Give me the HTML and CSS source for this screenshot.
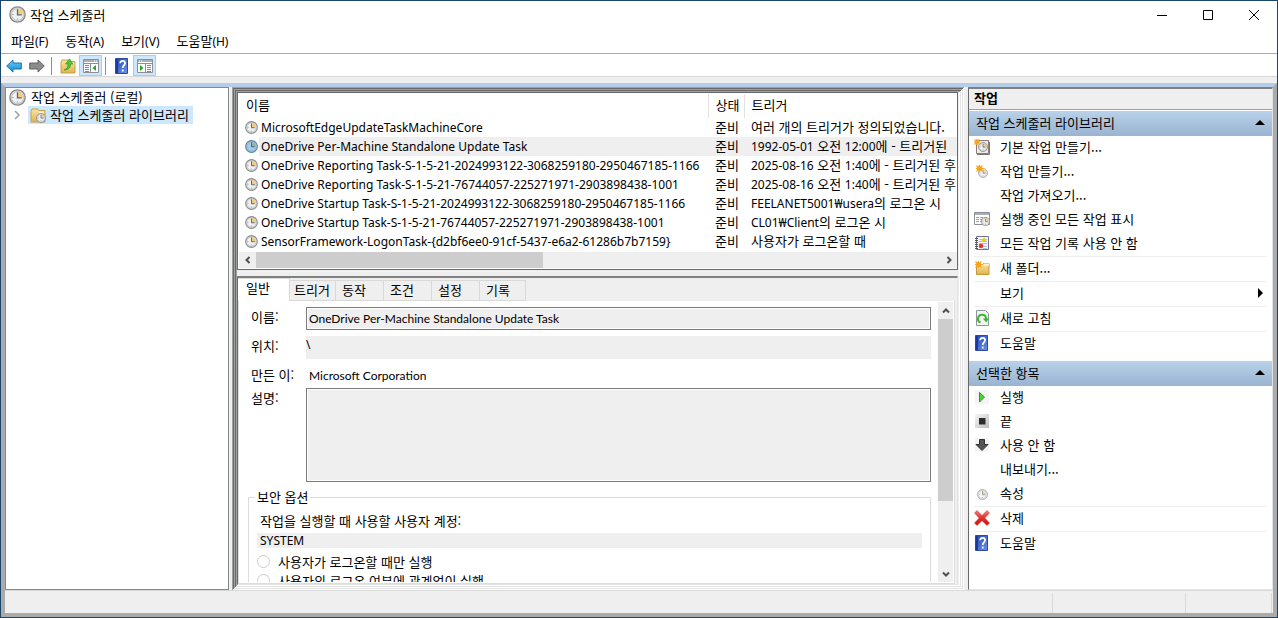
FILE: index.html
```html
<!DOCTYPE html>
<html lang="ko">
<head>
<meta charset="utf-8">
<title>작업 스케줄러</title>
<link rel="stylesheet" href="styles.css">
</head>
<body>
<svg class="defs" aria-hidden="true">
  <defs>
    <linearGradient id="gold" x1="0" y1="0" x2="0" y2="1"><stop offset="0" stop-color="#fbe5a0"/><stop offset="1" stop-color="#dfb452"/></linearGradient>
    <linearGradient id="navy" x1="0" y1="0" x2="1" y2="1"><stop offset="0" stop-color="#2446b4"/><stop offset="1" stop-color="#6c92ea"/></linearGradient>
    <linearGradient id="azure" x1="0" y1="0" x2="0" y2="1"><stop offset="0" stop-color="#6fd0f8"/><stop offset="1" stop-color="#0f86cf"/></linearGradient>
    <linearGradient id="rose" x1="0" y1="0" x2="0" y2="1"><stop offset="0" stop-color="#f57c78"/><stop offset=".5" stop-color="#e32f2c"/><stop offset="1" stop-color="#c81411"/></linearGradient>
    <linearGradient id="silver" x1="0" y1="0" x2="1" y2="1"><stop offset="0" stop-color="#f6f6f6"/><stop offset="1" stop-color="#bdbdbd"/></linearGradient>
    <symbol id="clock" viewBox="0 0 16 16">
      <circle cx="8" cy="8" r="7.200" fill="#dcdcdc" stroke="#8a8a8a" stroke-width="1.300"/>
      <circle cx="8" cy="8" r="5.600" fill="#eef1f4" stroke="#b8b8b8" stroke-width=".7"/>
      <path d="M8 8V2.600A5.400 5.400 0 0 1 13.400 8z" fill="#f3cf7c"/>
      <path d="M8 3v5.300h4" fill="none" stroke="#5d6573" stroke-width="1.200"/>
      <path d="M3.200 8h1M8 11.800v1" stroke="#888"/>
    </symbol>
    <symbol id="clock-selected" viewBox="0 0 16 16">
      <circle cx="8" cy="8" r="7.200" fill="#a9cbe2" stroke="#55809f" stroke-width="1.300"/>
      <circle cx="8" cy="8" r="5.600" fill="#a5cbe6" stroke="#84acc8" stroke-width=".7"/>
      <path d="M8 8V2.600A5.400 5.400 0 0 1 13.400 8z" fill="#96b6a0"/>
      <path d="M8 3v5.300h4" fill="none" stroke="#3c6890" stroke-width="1.200"/>
    </symbol>
    <symbol id="help" viewBox="0 0 16 16">
      <path d="M1.500.5h12v15h-12z" fill="url(#navy)" stroke="#2b4aa2"/>
      <path d="M2 1h2v14H2z" fill="#1b3aa0"/>
      <path d="M6.200 5.200c0-3 4.800-3 4.800.1 0 2-2.300 2.100-2.300 4.600M8.700 11.500v2" fill="none" stroke="#fff" stroke-width="1.800"/>
    </symbol>
    <symbol id="folder" viewBox="0 0 16 16">
      <path d="M1 4.500V15h14V3.500H9L8 2H2z" fill="url(#gold)" stroke="#c59a3d" stroke-width=".9"/>
      <path d="M9 4.500h5V6H9z" fill="#fff4cf"/>
    </symbol>
    <symbol id="spark" viewBox="0 0 10 10">
      <path d="M5 0l1 2.500L9 1 7.500 4 10 5 7.500 6 9 9 6 7.500 5 10 4 7.500 1 9l1.500-3L0 5l2.500-1L1 1l3 1.500z" fill="#f9a51b" stroke="#f9a51b" stroke-width="1.200"/>
    </symbol>
    <symbol id="pane" viewBox="0 0 18 16">
      <path d="M1.500 1.500h15v13h-15z" fill="#fff" stroke="#8b8f96"/>
      <path d="M2 2h14v2H2z" fill="#aaafb6"/><path d="M12 3h1M14 3h1" stroke="#fff"/>
      <path d="M2 5.500h14M8.500 6v8" stroke="#8b8f96"/>
      <path d="M3 7.500h4M3 9.500h4M3 11.500h4M3 13.500h4" stroke="#718bb0"/>
      <path d="M14 7v6l-3.500-3z" fill="#2fa51f"/>
    </symbol>
    <symbol id="arrow" viewBox="0 0 16 14">
      <path d="M.7 7L7 .9V4h8.300v6H7v3.100z" stroke-width="1"/>
    </symbol>
    <symbol id="chevron" viewBox="0 0 8 8"><path d="M1 5.500l3-3 3 3" fill="none" stroke="#505050" stroke-width="2"/></symbol>
  </defs>
</svg>

<div class="window">
  <header class="titlebar">
    <svg class="icon-18"><use href="#clock"/></svg>
    <h1>작업 스케줄러</h1>
    <div class="caption-buttons">
      <button type="button" aria-label="최소화"><svg width="12" height="12"><path d="M1 6.500h10" stroke="#000"/></svg></button>
      <button type="button" aria-label="최대화"><svg width="12" height="12"><path d="M1.500 1.500h9v9h-9z" fill="none" stroke="#000"/></svg></button>
      <button type="button" aria-label="닫기"><svg width="12" height="12"><path d="M1 1l10 10M11 1L1 11" stroke="#000"/></svg></button>
    </div>
  </header>

  <nav class="menubar">
    <button type="button">파일<span class="latin">(F)</span></button>
    <button type="button">동작<span class="latin">(A)</span></button>
    <button type="button">보기<span class="latin">(V)</span></button>
    <button type="button">도움말<span class="latin">(H)</span></button>
  </nav>

  <div class="toolbar">
    <button type="button" aria-label="뒤로"><svg class="tool-arrow" fill="url(#azure)" stroke="#2173a8"><use href="#arrow"/></svg></button>
    <button type="button" aria-label="앞으로"><svg class="tool-arrow flip" fill="#8c8c8c" stroke="#646464"><use href="#arrow"/></svg></button>
    <span class="tool-sep"></span>
    <button type="button" aria-label="위로"><svg class="icon-16" viewBox="0 0 16 16"><use href="#folder"/><path d="M4 12c3-1 4-3 4-6H5.500L9.500.8 13 6h-2.300c0 4-2.700 6-6.700 6z" fill="#4fc436" stroke="#2e9420" stroke-width=".6"/></svg></button>
    <button type="button" class="pressed" aria-label="콘솔 트리"><svg class="icon-pane"><use href="#pane"/></svg></button>
    <span class="tool-sep"></span>
    <button type="button" aria-label="도움말"><svg class="icon-16"><use href="#help"/></svg></button>
    <button type="button" class="pressed" aria-label="작업 창"><svg class="icon-pane flip"><use href="#pane"/></svg></button>
  </div>

  <div class="workspace">
    <main class="panes">
      <aside class="tree">
        <div class="tree-root"><svg class="icon-18"><use href="#clock"/></svg><span>작업 스케줄러 (로컬)</span></div>
        <div class="tree-child">
          <svg class="expander" viewBox="0 0 8 10"><path d="M2 1l4 4-4 4" fill="none" stroke="#a0a0a0" stroke-width="1.500"/></svg>
          <span class="tree-selected"><svg class="icon-16" viewBox="0 0 16 16"><use href="#folder"/><use href="#clock" x="6" y="6" width="10" height="10"/></svg><span>작업 스케줄러 라이브러리</span></span>
        </div>
      </aside>

      <section class="center">
        <div class="list-pane">
          <div class="list-view">
            <table>
              <colgroup><col class="col-name"><col class="col-state"><col></colgroup>
              <thead><tr><th>이름</th><th>상태</th><th>트리거</th></tr></thead>
              <tbody>
                <tr><td><svg class="icon-14"><use href="#clock"/></svg><span class="task">MicrosoftEdgeUpdateTaskMachineCore</span></td><td>준비</td><td>여러 개의 트리거가 정의되었습니다.</td></tr>
                <tr class="selected"><td><svg class="icon-14"><use href="#clock-selected"/></svg><span class="task">OneDrive Per-Machine Standalone Update Task</span></td><td>준비</td><td><span class="latin">1992-05-01</span> 오전 <span class="latin">12:00</span>에 - 트리거된</td></tr>
                <tr><td><svg class="icon-14"><use href="#clock"/></svg><span class="task">OneDrive Reporting Task-S-1-5-21-2024993122-3068259180-2950467185-1166</span></td><td>준비</td><td><span class="latin">2025-08-16</span> 오전 <span class="latin">1:40</span>에 - 트리거된 후</td></tr>
                <tr><td><svg class="icon-14"><use href="#clock"/></svg><span class="task">OneDrive Reporting Task-S-1-5-21-76744057-225271971-2903898438-1001</span></td><td>준비</td><td><span class="latin">2025-08-16</span> 오전 <span class="latin">1:40</span>에 - 트리거된 후</td></tr>
                <tr><td><svg class="icon-14"><use href="#clock"/></svg><span class="task">OneDrive Startup Task-S-1-5-21-2024993122-3068259180-2950467185-1166</span></td><td>준비</td><td><span class="latin">FEELANET5001₩usera</span>의 로그온 시</td></tr>
                <tr><td><svg class="icon-14"><use href="#clock"/></svg><span class="task">OneDrive Startup Task-S-1-5-21-76744057-225271971-2903898438-1001</span></td><td>준비</td><td><span class="latin">CL01₩Client</span>의 로그온 시</td></tr>
                <tr><td><svg class="icon-14"><use href="#clock"/></svg><span class="task">SensorFramework-LogonTask-{d2bf6ee0-91cf-5437-e6a2-61286b7b7159}</span></td><td>준비</td><td>사용자가 로그온할 때</td></tr>
              </tbody>
            </table>
            <div class="scroll-x">
              <button type="button" aria-label="왼쪽으로"><svg class="chev left"><use href="#chevron"/></svg></button>
              <div class="track"><div class="thumb"></div></div>
              <button type="button" aria-label="오른쪽으로"><svg class="chev right"><use href="#chevron"/></svg></button>
            </div>
          </div>
        </div>

        <div class="detail-pane">
          <div class="tabs" role="tablist">
            <button type="button" role="tab" aria-selected="true">일반</button>
            <button type="button" role="tab">트리거</button>
            <button type="button" role="tab">동작</button>
            <button type="button" role="tab">조건</button>
            <button type="button" role="tab">설정</button>
            <button type="button" role="tab">기록</button>
          </div>
          <div class="tab-page">
            <form class="general">
              <label for="name">이름:</label><input id="name" class="box" type="text" readonly value="OneDrive Per-Machine Standalone Update Task">
              <label for="path">위치:</label><input id="path" class="flat" type="text" readonly value="\">
              <label for="author">만든 이:</label><output id="author">Microsoft Corporation</output>
              <label for="desc">설명:</label><textarea id="desc" class="box" readonly></textarea>
              <fieldset>
                <legend>보안 옵션</legend>
                <p>작업을 실행할 때 사용할 사용자 계정:</p>
                <p class="account">SYSTEM</p>
                <label class="choice"><input type="radio" name="logon" disabled>사용자가 로그온할 때만 실행</label>
                <label class="choice"><input type="radio" name="logon" disabled>사용자의 로그온 여부에 관계없이 실행</label>
              </fieldset>
            </form>
            <div class="scroll-y">
              <button type="button" aria-label="위로"><svg class="chev"><use href="#chevron"/></svg></button>
              <div class="track"><div class="thumb"></div></div>
              <button type="button" aria-label="아래로"><svg class="chev down"><use href="#chevron"/></svg></button>
            </div>
          </div>
        </div>
      </section>

      <aside class="actions">
        <h2>작업</h2>
        <h3>작업 스케줄러 라이브러리<svg width="10" height="5"><path d="M0 5l5-5 5 5z"/></svg></h3>
        <ul>
          <li><button type="button"><svg class="icon-16" viewBox="0 0 16 16"><path d="M2.500 1.500h12v13h-12z" fill="#efece7" stroke="#8a7d78"/><path d="M3 15.500h12.500V3" fill="none" stroke="#777"/><use href="#clock" x="4" y="3" width="10" height="10"/><use href="#spark" x="0" y="0" width="6" height="6"/></svg>기본 작업 만들기...</button></li>
          <li><button type="button"><svg class="icon-16" viewBox="0 0 16 16"><use href="#clock" x="4" y="5" width="10" height="10" opacity=".8"/><use href="#spark" x="2" y="2" width="7" height="7"/></svg>작업 만들기...</button></li>
          <li><button type="button"><span class="icon-16"></span>작업 가져오기...</button></li>
          <li><button type="button"><svg class="icon-16" viewBox="0 0 16 16"><path d="M.5 1.500h15v12H.5z" fill="#fff" stroke="#8b8f96"/><path d="M1 2h14v2H1z" fill="#aaafb6"/><path d="M2 6.500h12M2 8.500h9M2 10.500h9" stroke="#94a0b0" stroke-dasharray="3 1"/><use href="#clock" x="7" y="6" width="9" height="9"/></svg>실행 중인 모든 작업 표시</button></li>
          <li><button type="button"><svg class="icon-16" viewBox="0 0 16 16"><path d="M2.500 1.500h12v13h-12z" fill="#f5f7fb" stroke="#6b7890"/><path d="M1 3.500h3M1 5.500h3M1 7.500h3M1 9.500h3M1 11.500h3M1 13.500h3" stroke="#555"/><path d="M5 4.500h8M5 6.500h8M5 8.500h8M9 11.500h4M9 13.500h4" stroke="#a0b0d0" stroke-width=".8"/><path d="M10 2l3 5H7z" fill="#f7c914"/><circle cx="7" cy="11" r="2.300" fill="#dc3a32"/></svg>모든 작업 기록 사용 안 함</button></li>
          <li class="ruled"><button type="button"><svg class="icon-16" viewBox="0 0 16 16"><path d="M2.500 14.500v-9l1-1h5l1-1h5.500v11z" fill="url(#gold)" stroke="#c59a3d"/><path d="M10 3.500h5v2h-5z" fill="#fff4cf"/><use href="#spark" x="1" y="1" width="7" height="7"/></svg>새 폴더...</button></li>
          <li class="ruled"><button type="button"><span class="icon-16"></span>보기<svg class="submenu" width="5" height="10"><path d="M0 0l5 5-5 5z"/></svg></button></li>
          <li class="ruled"><button type="button"><svg class="icon-16" viewBox="0 0 16 16"><path d="M2.500.5h9l3 3v12h-12z" fill="#f4f6f6" stroke="#8f9696"/><path d="M6.500 12.500A4 4 0 1 1 12 9" fill="none" stroke="#3ab830" stroke-width="2"/><path d="M8.800 8.500h6l-2.500 4z" fill="#3ab830"/></svg>새로 고침</button></li>
          <li class="ruled"><button type="button"><svg class="icon-16"><use href="#help"/></svg>도움말</button></li>
        </ul>
        <h3>선택한 항목<svg width="10" height="5"><path d="M0 5l5-5 5 5z"/></svg></h3>
        <ul>
          <li><button type="button"><svg class="icon-16" viewBox="0 0 16 16"><path d="M1 1h14v14H1z" fill="#f4f4f4"/><path d="M5.500 3.500l5 4.500-5 5z" fill="#4bd33a" stroke="#259a1b"/></svg>실행</button></li>
          <li><button type="button"><svg class="icon-16" viewBox="0 0 16 16"><path d="M1 1h14v14H1z" fill="url(#silver)"/><path d="M5 5h6.500v6.500H5z" fill="#2b2b2b"/></svg>끝</button></li>
          <li><button type="button"><svg class="icon-16" viewBox="0 0 16 16"><path d="M1 1h14v14H1z" fill="#f4f4f4"/><path d="M5.500 2.500h5v5H14l-6 6-6-6h3.500z" fill="#555" stroke="#333"/></svg>사용 안 함</button></li>
          <li><button type="button"><span class="icon-16"></span>내보내기...</button></li>
          <li><button type="button"><svg class="icon-16" viewBox="0 0 16 16"><use href="#clock" x="3" y="4" width="11" height="11" opacity=".75"/></svg>속성</button></li>
          <li class="ruled"><button type="button"><svg class="icon-16" viewBox="0 0 16 16"><path d="M3 .5L8 5.500 13 .5 15.500 3 10.800 8l4.700 5-2.500 2.500L8 10.700 3 15.500.5 13l4.700-5L.5 3z" fill="url(#rose)" stroke="#c44" stroke-width=".6"/></svg>삭제</button></li>
          <li class="ruled"><button type="button"><svg class="icon-16"><use href="#help"/></svg>도움말</button></li>
        </ul>
      </aside>
    </main>
    <footer class="statusbar"><span></span><span></span><span></span></footer>
  </div>
</div>
</body>
</html>
```
FILE: styles.css
```css
* { box-sizing: border-box; }

body {
  margin: 0;
  color: #000;
  font: 13px/18px "Noto Sans CJK KR", "Open Sans", sans-serif;
}

button, input, textarea { font: inherit; color: inherit; }
button { border: 0; padding: 0; background: none; }
h1, h2, h3, p, ul { margin: 0; padding: 0; font-size: 13px; font-weight: 400; }
ul { list-style: none; }
svg { display: block; flex: none; }

.defs { position: absolute; width: 0; height: 0; }
.latin, .task, .account, .flat { font: 12px/18px "Noto Sans", "Noto Sans CJK KR", sans-serif; }
.box, output { font: 12px/18px Lato, "Noto Sans CJK KR", sans-serif; }
.icon-14 { width: 13px; height: 13px; }
.icon-16 { width: 16px; height: 16px; flex: none; }
.icon-18 { width: 17px; height: 17px; }
.icon-pane { width: 18px; height: 16px; }
.flip { transform: scaleX(-1); }

.window {
  display: flex;
  flex-direction: column;
  height: 100vh;
  border: 1px solid #1c4668;
  background: #efefef;
}

/* Title, menu and tool bars */
.titlebar {
  display: flex;
  align-items: center;
  gap: 4px;
  height: 29px;
  padding-left: 8px;
  padding-bottom: 2px;
  background: #fff;
}
.caption-buttons { display: flex; margin-left: auto; }
.caption-buttons button { display: grid; place-items: center; width: 46px; height: 27px; }

.menubar {
  display: flex;
  gap: 17px;
  height: 24px;
  padding: 0 10px;
  border-bottom: 1px solid #a9adb5;
  background: #fff;
}

.toolbar {
  display: flex;
  align-items: center;
  height: 23px;
  padding: 1px 0 0 1px;
  border-bottom: 1px solid #d9d9d9;
  background: #fff;
}
.toolbar button { display: grid; place-items: center; width: 23px; height: 21px; }
.toolbar .pressed { border: 1px solid #99d1ff; background: #cce8ff; }
.tool-arrow { width: 16px; height: 14px; }
.tool-sep { width: 1px; height: 18px; margin: 0 4px 0 3px; background: #8d8d8d; }

/* Working area */
.workspace {
  display: flex;
  flex: 1;
  flex-direction: column;
  min-height: 0;
  margin-top: 6px;
  border: 4px solid #ababab;
  border-top: 4px solid #b3cdea;
}
.panes {
  display: grid;
  grid-template-columns: 224px 1fr 305px;
  flex: 1;
  gap: 3px;
  min-height: 0;
}

.tree { border: 1px solid #828790; background: #fff; }
.tree-root, .tree-child { display: flex; align-items: center; height: 18px; white-space: nowrap; }
.tree-root { gap: 5px; padding-left: 3px; }
.tree-child { padding-left: 7px; gap: 7px; }
.expander { width: 8px; height: 10px; }
.tree-selected { display: flex; align-items: center; gap: 4px; padding: 0 4px 0 2px; background: #cce8ff; }

.center {
  display: flex;
  flex-direction: column;
  min-width: 0;
  min-height: 0;
  margin-right: 1px;
  padding: 5px 6px 5px 5px;
  box-shadow:
    inset 1px 1px #a0a0a0, inset -1px -1px #fff,
    inset 2px 2px #696969, inset -2px -2px #e3e3e3,
    inset 3px 3px #a0a0a0, inset -3px -3px #fff,
    inset 4px 4px #696969, inset -4px -4px #e3e3e3,
    inset 5px 5px #a0a0a0, inset -5px -5px #fff;
}
.list-pane { padding: 1px 0 1px 1px; border: 1px solid #696969; background: #fff; }
.list-view { overflow: hidden; }
.list-view table { width: 100%; table-layout: fixed; border-collapse: collapse; }
.col-name { width: 469px; }
.col-state { width: 36px; }
th, td { overflow: hidden; padding: 0 0 0 7px; text-align: left; font-weight: 400; white-space: nowrap; }
th { height: 24px; padding-bottom: 2px; border-right: 1px solid #e3e3e3; }
th:last-child { border-right: 0; }
td { height: 19px; padding-bottom: 1px; }
td .latin { line-height: 14px; }
td:first-child { display: flex; align-items: center; gap: 3px; padding-left: 6px; padding-bottom: 0; }
.selected { background: linear-gradient(to right, #fff 20px, #efefef 20px); }

.scroll-x { display: flex; height: 16px; margin-top: 1px; background: #efefef; }
.scroll-x button, .scroll-y button { display: grid; place-items: center; width: 17px; height: 16px; }
.track { flex: 1; }
.scroll-x .thumb { width: 42%; height: 100%; background: #cdcdcd; }
.chev { width: 8px; height: 8px; }
.left { transform: rotate(-90deg); }
.right { transform: rotate(90deg); }
.down { transform: rotate(180deg); }

.detail-pane {
  display: flex;
  flex: 1;
  flex-direction: column;
  min-height: 0;
  margin-top: 6px;
  border: 1px solid #e3e3e3;
  border-top: 2px solid #808080;
  border-left-color: #696969;
}
.tabs { display: flex; align-items: flex-end; height: 23px; }
.tabs button {
  width: 48px;
  height: 21px;
  padding: 0 0 2px 6px;
  border: 1px solid #d9d9d9;
  border-left-width: 0;
  text-align: left;
}
.tabs button:nth-child(2) { width: 46px; padding-left: 4px; }
.tabs button:last-child { width: 46px; }
.tabs [aria-selected] { width: 52px; height: 23px; padding: 0 0 4px 8px; border-bottom: 0; background: #fff; }

.tab-page {
  display: flex;
  flex: 1;
  min-height: 0;
  margin-right: 2px;
  padding: 1px 1px 1px 0;
  border: 1px solid #dcdcdc;
  border-top: 0;
  background: #fff;
}
.general {
  display: grid;
  grid-template-columns: 58px 1fr;
  grid-template-rows: 23px 23px 17px 94px auto;
  row-gap: 6px;
  flex: 1;
  min-width: 0;
  overflow: hidden;
  padding: 5px 7px 0 9px;
}
.general > label { padding: 1px 0 0 3px; }
.general input[type="text"], .general textarea { width: 100%; margin: 0; background: #efefef; outline: 0; }
.general .box { padding: 0 2px; border: 1px solid #7a7a7a; box-shadow: inset 0 0 0 1px #fff; }
.general textarea { height: 94px; resize: none; }
.general .flat { border: 0; padding: 0 0 6px; }
output { padding: 2px 0 0 3px; }

fieldset {
  grid-column: 1 / -1;
  min-width: 0;
  height: 140px;
  margin: 0;
  padding: 6px 8px 0;
  border: 1px solid #dcdcdc;
}
legend { padding: 0 2px; margin-left: -2px; }
fieldset p { padding-left: 3px; }
fieldset .account { height: 15px; margin: 3px 0 4px; line-height: 15px; background: #efefef; }
.choice { display: flex; align-items: center; gap: 8px; height: 19px; }
.choice input { appearance: none; width: 13px; height: 13px; margin: 0; border: 1px solid #ccc; border-radius: 50%; background: #fff; }

.scroll-y { display: flex; flex-direction: column; width: 15px; background: #efefef; }
.scroll-y button { width: 15px; height: 17px; }
.scroll-y .thumb { height: 74%; background: #cdcdcd; }

/* Actions pane */
.actions { border: 1px solid #e3e3e3; border-top: 2px solid #808080; border-left: 1px solid #696969; background: #fff; }
.actions h2 { height: 21px; padding-left: 5px; border-bottom: 1px solid #a0a0a0; background: #efefef; font-weight: 700; }
.actions h3 {
  display: flex;
  align-items: center;
  justify-content: space-between;
  height: 25px;
  padding: 0 7px 2px;
  background: linear-gradient(#b9d1ea, #99b4d1);
}
.actions h2 + h3 { margin-top: 1px; }
.actions ul + h3 { margin-top: 5px; }
.actions ul { padding: 0 5px; }
.actions li button { display: flex; align-items: center; gap: 10px; width: 100%; height: 24px; padding-bottom: 2px; text-align: left; }
.ruled { border-top: 1px solid #efefef; }
.submenu { margin: 0 4px 0 auto; }

.statusbar {
  display: grid;
  grid-template-columns: 1fr 133px 86px;
  height: 23px;
  padding: 2px 1px 0 0;
  border-top: 1px solid #d9d9d9;
}
.statusbar span { border-right: 1px solid #d9d9d9; }
```
